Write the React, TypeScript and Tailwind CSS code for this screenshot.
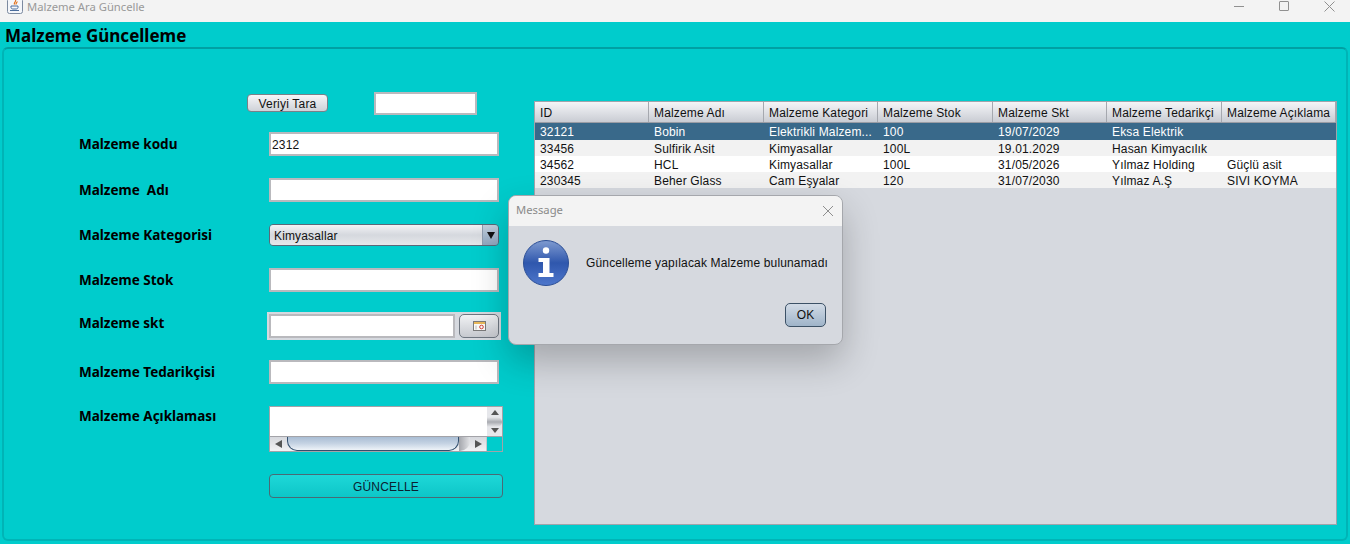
import type { ReactNode } from "react";

const columns = [
  { title: "ID", width: "w-[114px]" },
  { title: "Malzeme Adı", width: "w-[115px]" },
  { title: "Malzeme Kategori", width: "w-[114px]" },
  { title: "Malzeme Stok", width: "w-[115px]" },
  { title: "Malzeme Skt", width: "w-[114px]" },
  { title: "Malzeme Tedarikçi", width: "w-[115px]" },
  { title: "Malzeme Açıklama", width: "w-[114px]" },
];

const rows = [
  ["32121", "Bobin", "Elektrikli Malzem...", "100", "19/07/2029", "Eksa Elektrik", ""],
  ["33456", "Sulfirik Asit", "Kimyasallar", "100L", "19.01.2029", "Hasan Kimyacılık", ""],
  ["34562", "HCL", "Kimyasallar", "100L", "31/05/2026", "Yılmaz Holding", "Güçlü asit"],
  ["230345", "Beher Glass", "Cam Eşyalar", "120", "31/07/2030", "Yılmaz A.Ş", "SIVI KOYMA"],
];

function JavaIcon() {
  return (
    <svg width="16" height="16" viewBox="0 0 16 16" className="shrink-0">
      <rect x="0.5" y="0.5" width="15" height="15" rx="2" fill="#f4f6fa" stroke="#7c8aa0" />
      <path d="M8.500 2c1 1.500-2 2.500-1 4.500M10 3.500c.5 1-1.500 1.500-.8 3" fill="none" stroke="#e2711d" strokeWidth="1.200" />
      <path d="M4 8h7v1.500c0 1-1 1.500-2 1.500H6c-1 0-2-.5-2-1.500z M3 12.500h9" fill="none" stroke="#4a6d9c" strokeWidth="1" />
    </svg>
  );
}

function CalendarIcon() {
  return (
    <svg width="13" height="10" viewBox="0 0 13 10">
      <rect x="0.5" y="0.5" width="12" height="9" fill="#fbfbf8" stroke="#7b7b7b" />
      <rect x="1" y="1" width="11" height="2" fill="#e9b95a" />
      <circle cx="8.500" cy="6" r="1.800" fill="none" stroke="#d2413a" />
      <path d="M3 4.500v4" stroke="#b9b9b9" />
    </svg>
  );
}

function InfoIcon() {
  return (
    <svg width="48" height="48" viewBox="0 0 48 48" className="shrink-0">
      <defs>
        <linearGradient id="info-bg" x1="0" y1="0" x2="0" y2="1">
          <stop offset="0" stopColor="#7f9bd0" />
          <stop offset="0.5" stopColor="#2f57ad" />
          <stop offset="1" stopColor="#4e77cc" />
        </linearGradient>
      </defs>
      <circle cx="24" cy="24" r="22.500" fill="url(#info-bg)" stroke="#2c4f96" />
      <circle cx="24" cy="11.500" r="3.200" fill="#fff" />
      <path d="M16.500 19h11v15h4v4h-15v-4h4.500V23h-4.500z" fill="#fff" />
    </svg>
  );
}

function TextBox({ className }: { className: string }) {
  return <div className={`bg-white border-2 border-[#b9b9bd] ${className}`} />;
}

function FormRow({ label, mt, children, labelClass = "items-center pt-[1px]" }: { label: string; mt: string; children: ReactNode; labelClass?: string }) {
  return (
    <div className={`flex ${mt}`}>
      <div className={`flex w-[190px] shrink-0 whitespace-pre text-[13.500px] font-bold font-['Noto_Sans',sans-serif] text-black ${labelClass}`}>{label}</div>
      {children}
    </div>
  );
}

function TextArea() {
  return (
    <div className="w-[234px] h-[46px] border border-[#a3a3a8] flex flex-col">
      <div className="flex h-[30px] border-b border-[#a3a3a8]">
        <div className="w-[217px] bg-white" />
        <div className="flex-1 bg-[#e6e7eb] flex flex-col items-center justify-between py-[3px]">
          <div className="w-0 h-0 border-x-[4px] border-x-transparent border-b-[5px] border-b-[#555]" />
          <div className="w-full h-[10px] rounded-r-full bg-gradient-to-b from-[#e8e9ec] via-[#a9abb1] to-[#e8e9ec]" />
          <div className="w-0 h-0 border-x-[4px] border-x-transparent border-t-[5px] border-t-[#555]" />
        </div>
      </div>
      <div className="flex flex-1 min-h-0">
        <div className="w-[217px] flex bg-gradient-to-b from-[#d6d8dd] to-[#f2f2f4] border-r border-[#c5c7cc]">
          <div className="w-[17px] flex items-center justify-center">
            <div className="w-0 h-0 border-y-[4px] border-y-transparent border-r-[7px] border-r-[#555]" />
          </div>
          <div className="w-[172px] rounded-b-[10px] border border-t-0 border-[#33506f] bg-gradient-to-b from-[#a9bdd4] via-[#c5d3e3] to-[#eef3f8]" />
          <div className="w-[11px] rounded-br-[10px] bg-gradient-to-r from-[#a4a6ac] to-[#e2e3e6]" />
          <div className="flex-1 flex items-center justify-center">
            <div className="w-0 h-0 border-y-[4px] border-y-transparent border-l-[7px] border-l-[#555]" />
          </div>
        </div>
      </div>
    </div>
  );
}

function DataTable() {
  return (
    <div className="w-[803px] h-[424px] mt-[52px] bg-[#d6d9df] border border-[#a0a4ab] font-['Liberation_Sans',sans-serif] text-[12px] tracking-[0.15px] text-[#111]">
      <div className="flex h-[21px] bg-gradient-to-b from-[#f4f5f7] via-[#dfe1e6] to-[#c9ccd3] border-b border-[#9a9da5]">
        {columns.map((col) => (
          <div key={col.title} className={`${col.width} flex items-center pl-[5px] pt-[1px] border-r border-[#a5a8af] whitespace-nowrap overflow-hidden`}>
            {col.title}
          </div>
        ))}
      </div>
      {rows.map((row, i) => (
        <div key={row[0]} className={`flex items-center pt-[1px] ${i === 0 ? "bg-[#39698a] text-white h-[17px]" : i % 2 === 1 ? "bg-[#f2f2f2] h-[16px]" : "bg-white h-[16px]"}`}>
          {row.map((cell, j) => (
            <div key={j} className={`${columns[j].width} pl-[5px] whitespace-nowrap overflow-hidden`}>
              {cell}
            </div>
          ))}
        </div>
      ))}
    </div>
  );
}

function MessageDialog() {
  return (
    <div className="absolute left-[508px] top-[195px] w-[335px] h-[150px] rounded-[8px] border border-[#a5a7ac] overflow-hidden bg-[#d6d9df] shadow-[0_16px_36px_rgba(0,0,0,0.24)] flex flex-col">
      <div className="h-[30px] bg-[#f3f3f3] flex items-center justify-between pl-[7px] pr-[8px] text-[11.250px] text-[#8a8a8a] font-['Noto_Sans',sans-serif]">
        <span className="-mt-[1px]">Message</span>
        <svg width="12" height="12" viewBox="0 0 12 12" stroke="#8e8e8e" fill="none">
          <path d="M1 1l10 10M11 1L1 11" />
        </svg>
      </div>
      <div className="flex-1 flex flex-col">
        <div className="flex items-center mt-[13px] pl-[13px]">
          <InfoIcon />
          <span className="ml-[16px] text-[12px] tracking-[0.15px] text-[#111] font-['Liberation_Sans',sans-serif] whitespace-nowrap">
            Güncelleme yapılacak Malzeme bulunamadı
          </span>
        </div>
        <div className="flex justify-end pr-[16px] mt-[16px]">
          <button className="w-[41px] h-[24px] rounded-[5px] border border-[#3c5166] bg-gradient-to-b from-[#d2dbe6] to-[#9fb4c9] text-[12px] tracking-[0.2px] text-[#111] font-['Liberation_Sans',sans-serif]">
            OK
          </button>
        </div>
      </div>
    </div>
  );
}

export default function App() {
  return (
    <div className="relative w-[1350px] h-[544px] overflow-hidden bg-[#00cccc]">
      <div className="h-[22px] bg-[#f3f3f3] flex items-start justify-between pl-[7px] pr-[15px] overflow-hidden">
        <div className="flex items-start gap-[4px]">
          <div className="-mt-[2px]">
            <JavaIcon />
          </div>
          <span className="text-[11.250px] leading-[14px] text-[#999] font-['Noto_Sans',sans-serif]">Malzeme Ara Güncelle</span>
        </div>
        <div className="flex items-center gap-[35px] h-[12px]">
          <div className="w-[10px] h-px bg-[#909090]" />
          <div className="w-[10px] h-[10px] border border-[#909090] rounded-[1px]" />
          <svg width="11" height="11" viewBox="0 0 11 11" stroke="#909090" fill="none">
            <path d="M0.500 0.500l10 10M10.500 0.500l-10 10" />
          </svg>
        </div>
      </div>

      <h1 className="h-[25px] pl-[5px] pt-[3px] flex items-center text-[17px] font-bold text-black font-['Noto_Sans',sans-serif]">Malzeme Güncelleme</h1>

      <div className="mx-[2px] h-[494px] border-2 border-[#00b4b6] border-t-[#00a0a3] rounded-[6px] flex">
        <div className="w-[530px] shrink-0 pl-[75px]">
          <div className="flex items-start mt-[43px] h-[23px]">
            <button className="ml-[168px] mt-[2px] w-[81px] h-[18px] rounded-[4px] border border-[#7b8088] bg-gradient-to-b from-[#f6f6f8] to-[#cfd2d8] text-[12px] tracking-[0.2px] text-[#111] font-['Liberation_Sans',sans-serif]">
              Veriyi Tara
            </button>
            <TextBox className="ml-[46px] w-[103px] h-[23px]" />
          </div>

          <FormRow label="Malzeme kodu" mt="mt-[17px]">
            <div className="w-[230px] h-[24px] bg-white border-2 border-[#b9b9bd] flex items-center pl-[1px] pt-[1px] text-[12px] tracking-[0.15px] text-[#111] font-['Liberation_Sans',sans-serif]">2312</div>
          </FormRow>

          <FormRow label="Malzeme  Adı" mt="mt-[22px]">
            <TextBox className="w-[230px] h-[24px]" />
          </FormRow>

          <FormRow label="Malzeme Kategorisi" mt="mt-[22px]">
            <div className="w-[230px] h-[22px] flex rounded-[4px] border border-[#5c6878] overflow-hidden text-[12px] tracking-[0.15px] text-[#111] font-['Liberation_Sans',sans-serif]">
              <div className="flex-1 flex items-center pl-[4px] pt-[1px] bg-gradient-to-b from-[#f2f3f5] via-[#d5d8de] to-[#e6e7ea]">Kimyasallar</div>
              <div className="w-[16px] flex items-center justify-center border-l border-[#8e9cae] bg-gradient-to-b from-[#c3d0de] to-[#8fa6bf]">
                <div className="w-0 h-0 border-x-[4px] border-x-transparent border-t-[7px] border-t-[#111]" />
              </div>
            </div>
          </FormRow>

          <FormRow label="Malzeme Stok" mt="mt-[22px]">
            <TextBox className="w-[230px] h-[24px]" />
          </FormRow>

          <FormRow label="Malzeme skt" mt="mt-[20px]" labelClass="items-start pt-[1px]">
            <div className="-ml-[2px] w-[234px] h-[28px] bg-[#d6d9df] flex items-center pl-[2px] gap-[4px]">
              <TextBox className="w-[186px] h-[24px]" />
              <button className="w-[40px] h-[24px] rounded-[5px] border border-[#6e7680] bg-gradient-to-b from-[#f1f2f4] to-[#c6c9cf] flex items-center justify-center">
                <CalendarIcon />
              </button>
            </div>
          </FormRow>

          <FormRow label="Malzeme Tedarikçisi" mt="mt-[20px]">
            <TextBox className="w-[230px] h-[24px]" />
          </FormRow>

          <FormRow label="Malzeme Açıklaması" mt="mt-[22px]" labelClass="items-start">
            <TextArea />
          </FormRow>

          <div className="mt-[22px] ml-[190px] w-[234px] h-[24px] rounded-[4px] border border-[#4a6a75] bg-gradient-to-b from-[#1dd8d8] to-[#0cc6c8] flex items-center justify-center pt-[1px] text-[12px] tracking-[0.15px] text-[#0b2030] font-['Liberation_Sans',sans-serif]">
            GÜNCELLE
          </div>
        </div>

        <DataTable />
      </div>

      <MessageDialog />
    </div>
  );
}
